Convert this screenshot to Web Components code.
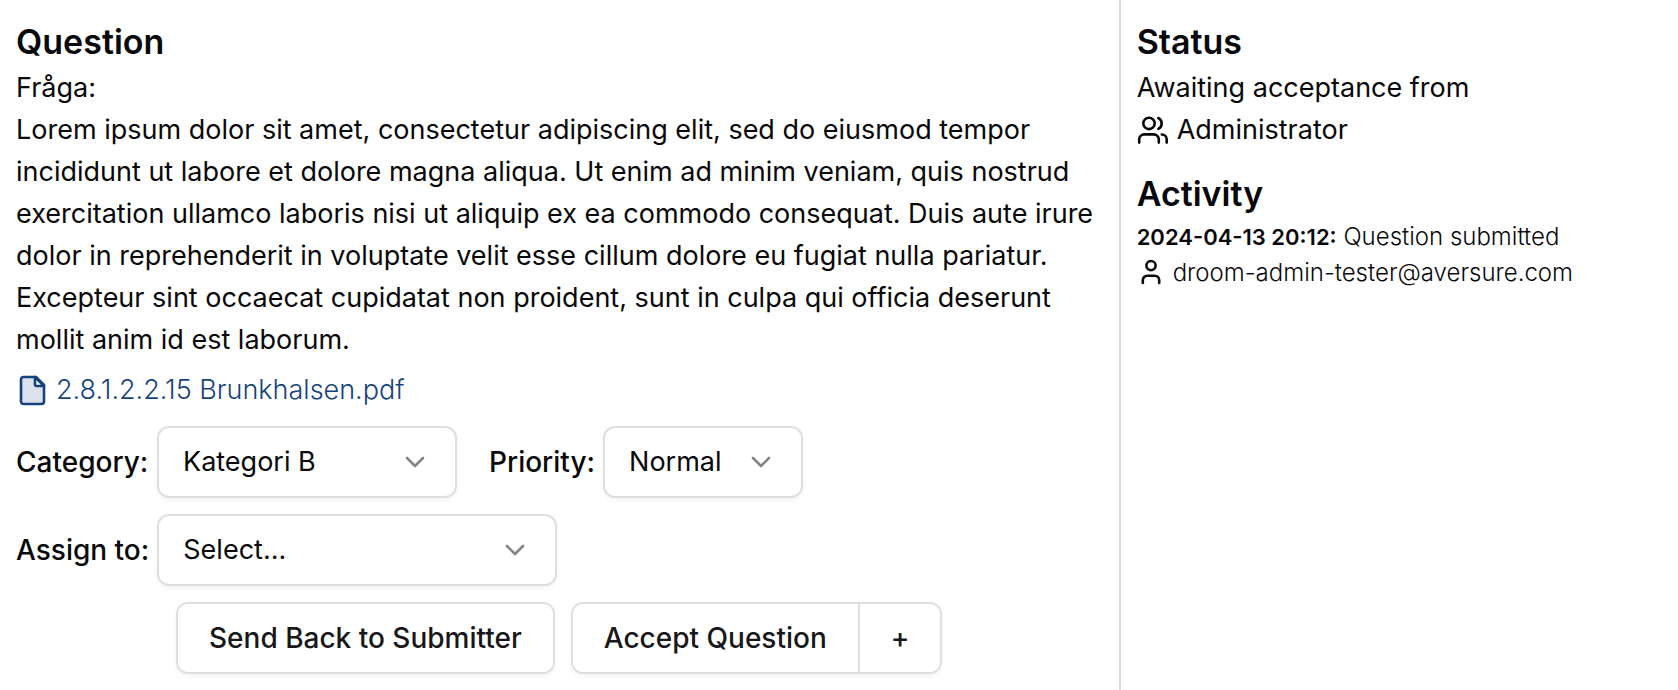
<!DOCTYPE html>
<html lang="en">
<head>
<meta charset="utf-8">
<meta name="viewport" content="width=device-width, initial-scale=1">
<title>Question</title>
<style>
  body {
    margin: 0;
    background: #fff;
    color: #09090b;
    font: 400 27px/42px Inter, "Liberation Sans", sans-serif;
  }
  p { margin: 0; }
</style>
</head>
<body>
<review-layout>
  <panel-section heading="Question">
    <p>Fråga:</p>
    <p>Lorem ipsum dolor sit amet, consectetur adipiscing elit, sed do eiusmod tempor incididunt ut labore et dolore magna aliqua. Ut enim ad minim veniam, quis nostrud exercitation ullamco laboris nisi ut aliquip ex ea commodo consequat. Duis aute irure dolor in reprehenderit in voluptate velit esse cillum dolore eu fugiat nulla pariatur. Excepteur sint occaecat cupidatat non proident, sunt in culpa qui officia deserunt mollit anim id est laborum.</p>
  </panel-section>
  <file-link href="#file">2.8.1.2.2.15 Brunkhalsen.pdf</file-link>
  <question-form></question-form>

  <panel-section slot="aside" heading="Status">
    <p>Awaiting acceptance from</p>
    <user-line icon="users">Administrator</user-line>
  </panel-section>
  <panel-section slot="aside" heading="Activity">
    <activity-entry time="2024-04-13 20:12:" user="droom-admin-tester@aversure.com">Question submitted</activity-entry>
  </panel-section>
</review-layout>

<script>
  function define(name, render) {
    customElements.define(name, class extends HTMLElement {
      connectedCallback() {
        if (this.shadowRoot) return;
        this.attachShadow({ mode: 'open' }).innerHTML = render(this);
      }
    });
  }

  const icons = {
    users: `<svg width="32" height="32" viewBox="0 -1 32 32"><circle cx="12" cy="8.4" r="5.7"/><path d="M2.2 27.6V24.4a5 5 0 0 1 5-5h9.6a5 5 0 0 1 5 5v3.2M21.3 3a6 6 0 0 1 0 10.8M24.8 19.5a5 5 0 0 1 4.9 5v3.1"/></svg>`,
    user: `<svg width="28" height="28" viewBox="0 2 28 28"><circle cx="14" cy="8.6" r="4.6"/><path d="M5.8 26v-2.8a4.5 4.5 0 0 1 4.5-4.5h7.4a4.5 4.5 0 0 1 4.5 4.5V26"/></svg>`,
    file: `<svg width="32" height="32" viewBox="0 0 32 32"><path fill="#dce1eb" d="M7.5 3H20l8 8v16.5a2.5 2.5 0 0 1-2.5 2.5h-18A2.5 2.5 0 0 1 5 27.5v-22A2.5 2.5 0 0 1 7.5 3z"/><path fill="#fff" d="M19 3v7.5a1.5 1.5 0 0 0 1.5 1.5H28z"/></svg>`,
    chevron: `<svg width="20" height="12" viewBox="0 0 20 12"><path d="M2 2l8 8 8-8"/></svg>`
  };

  define('ui-icon', el => `
    <style>
      :host { display: inline-flex; flex: none; }
      svg { display: block; fill: none; stroke: currentColor; stroke-width: 2.6; stroke-linecap: round; stroke-linejoin: round; }
    </style>${icons[el.getAttribute('name')]}`);

  define('review-layout', () => `
    <style>
      :host { display: grid; grid-template-columns: minmax(0, 2fr) minmax(0, 1fr); min-height: 100vh; }
      main, aside { box-sizing: border-box; padding: 16px; }
      main { display: flex; flex-direction: column; gap: 8px; }
      aside { display: flex; flex-direction: column; gap: 17px; border-left: 2px solid #dcdcdc; }
    </style>
    <main><slot></slot></main>
    <aside><slot name="aside"></slot></aside>`);

  define('panel-section', el => `
    <style>
      :host { display: block; }
      h2 { margin: 0; font-size: 34px; line-height: 51px; font-weight: 600; }
    </style>
    <section><h2>${el.getAttribute('heading')}</h2><slot></slot></section>`);

  define('file-link', el => `
    <style>
      :host { display: block; }
      a { display: flex; align-items: center; gap: 8px; width: fit-content; color: #16437e; font-weight: 300; text-decoration: none; }
    </style>
    <a href="${el.getAttribute('href')}"><ui-icon name="file"></ui-icon><slot></slot></a>`);

  define('user-line', el => `
    <style>
      :host { display: flex; align-items: center; gap: 8px; }
    </style>
    <ui-icon name="${el.getAttribute('icon')}"></ui-icon><span><slot></slot></span>`);

  define('activity-entry', el => `
    <style>
      :host { display: block; font-size: 24px; font-weight: 300; line-height: 36px; }
      time { font-size: 22px; font-weight: 600; }
    </style>
    <div><time>${el.getAttribute('time')}</time> <slot></slot></div>
    <user-line icon="user">${el.getAttribute('user')}</user-line>`);

  define('select-field', el => `
    <style>
      :host { display: flex; align-items: center; gap: 8px; }
      label { min-width: var(--label-width, auto); font-size: 28px; font-weight: 550; }
      .box { display: grid; align-items: center; width: ${el.getAttribute('width')}px; }
      select, ui-icon { grid-area: 1 / 1; }
      select {
        appearance: none; box-sizing: border-box; width: 100%; height: 72px; margin: 0; padding: 0 64px 0 24px;
        border: 2px solid #dfdfdf; border-radius: 12px; background: #fff; box-shadow: 0 2px 4px #0000000d;
        color: inherit; font: inherit;
      }
      ui-icon { justify-self: end; margin-right: 32px; color: #858585; pointer-events: none; }
    </style>
    <label for="field">${el.getAttribute('label')}</label>
    <div class="box">
      <select id="field"><option>${el.getAttribute('value')}</option></select>
      <ui-icon name="chevron"></ui-icon>
    </div>`);

  define('button-group', el => `
    <style>
      :host { display: flex; border: 2px solid #dfdfdf; border-radius: 12px; box-shadow: 0 2px 4px #0000000d; overflow: hidden; }
      button {
        height: 68px; margin: 0; padding: 0 31px; border: 0; background: #fff;
        color: #18181b; font: 550 28px/42px Inter, "Liberation Sans", sans-serif;
      }
      button + button { border-left: 2px solid #dfdfdf; }
    </style>
    ${el.getAttribute('actions').split('|').map(a => `<button type="button">${a}</button>`).join('')}`);

  define('question-form', () => `
    <style>
      :host { display: block; }
      form { display: flex; flex-direction: column; gap: 16px; padding-top: 7px; }
      .row { display: flex; flex-wrap: wrap; gap: 16px 32px; }
      .lead { --label-width: 133px; }
      .actions { gap: 16px; padding-left: 160px; }
    </style>
    <form>
      <div class="row">
        <select-field class="lead" label="Category:" value="Kategori B" width="300"></select-field>
        <select-field label="Priority:" value="Normal" width="200"></select-field>
      </div>
      <div class="row"><select-field class="lead" label="Assign to:" value="Select..." width="400"></select-field></div>
      <div class="row actions">
        <button-group actions="Send Back to Submitter"></button-group>
        <button-group actions="Accept Question|+"></button-group>
      </div>
    </form>`);
</script>
</body>
</html>
